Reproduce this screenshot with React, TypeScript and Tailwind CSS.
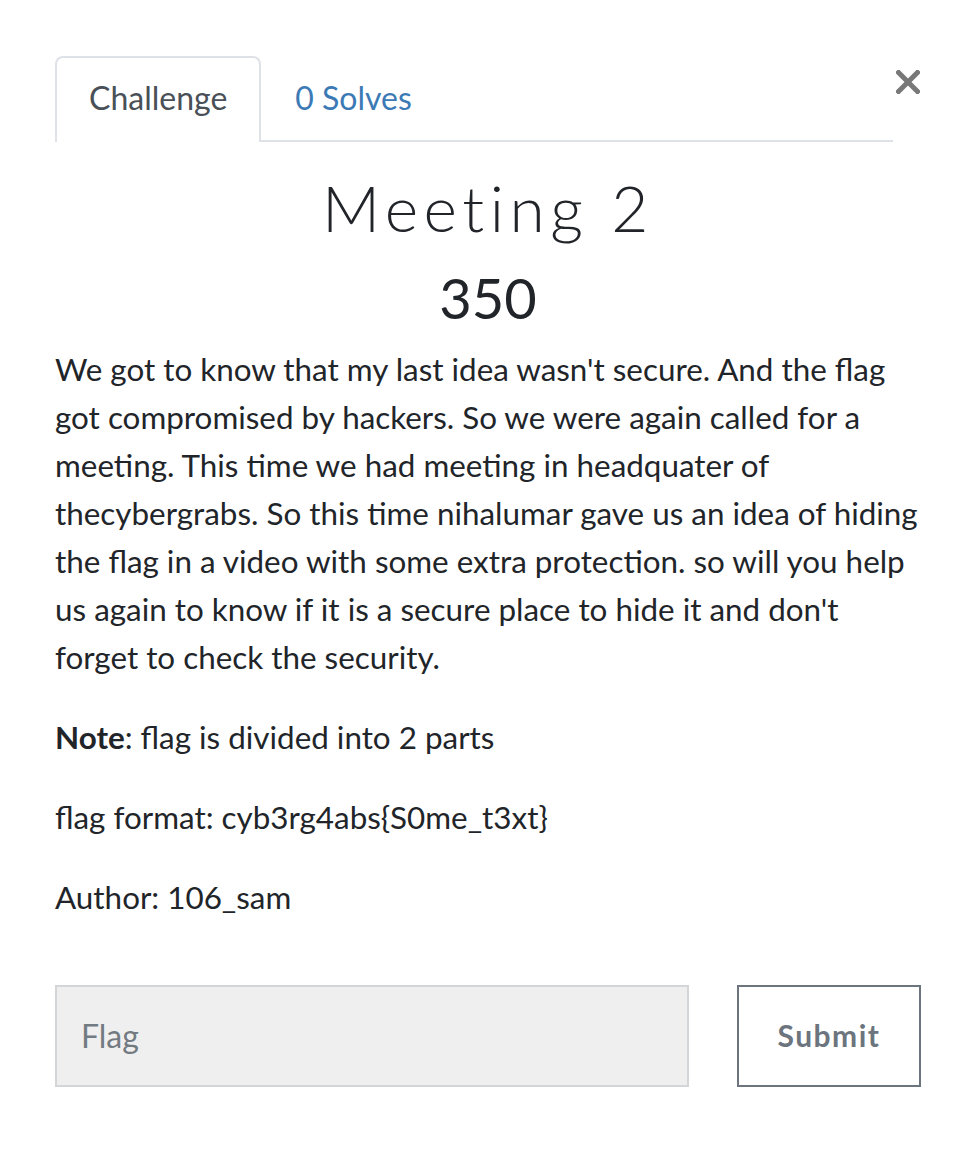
import React from "react";

export default function App() {
  return (
    <div className="w-[976px] min-h-[1162px] bg-white font-['Lato','Noto_Sans',sans-serif] text-[#212529]">
      <div className="px-[55px] pt-[56px]">
        <div className="flex items-start">
          <div className="flex flex-1 border-b-2 border-[#dee2e6]">
            <div className="-mb-[2px] rounded-t-[8px] border-2 border-b-0 border-[#dee2e6] bg-white px-[32px] py-[16px] text-[32px] leading-[48px] text-[#495057]">
              Challenge
            </div>
            <div className="border-2 border-transparent px-[32px] py-[16px] text-[32px] leading-[48px] text-[#3c7ab6]">
              0 Solves
            </div>
          </div>
          <button className="ml-[2px] mt-[14px] flex h-[24px] w-[26px] items-center justify-center">
            <svg width="24" height="24" viewBox="0 0 24 24">
              <path d="M2.5 2.5 L21.5 21.5 M21.5 2.5 L2.5 21.5" stroke="#787878" strokeWidth="5" strokeLinecap="square" />
            </svg>
          </button>
        </div>

        <h2 className="mt-[28px] text-center font-['Lato',sans-serif] text-[64px] font-light leading-[1.2] tracking-[5.5px]">
          Meeting 2
        </h2>
        <h3 className="mt-[17px] text-center text-[56px] leading-[1.2]">350</h3>

        <div className="mt-[14px] text-[31.4px] leading-[48px]">
          <p className="mb-[32px]">
            We got to know that my last idea wasn't secure. And the flag got compromised by hackers. So we were again called for a meeting. This time we had meeting in headquater of thecybergrabs. So this time nihalumar gave us an idea of hiding the flag in a video with some extra protection. so will you help us again to know if it is a secure place to hide it and don't forget to check the security.
          </p>
          <p className="mb-[32px]">
            <strong className="font-bold">Note</strong>: flag is divided into 2 parts
          </p>
          <p className="mb-[32px]">flag format: cyb3rg4abs{"{"}S0me_t3xt{"}"}</p>
          <p className="mb-[32px]">Author: 106_sam</p>
        </div>

        <div className="mt-[64px] flex gap-[48px]">
          <input
            className="h-[102px] flex-1 border-2 border-[#d3d6d9] bg-[#efefef] px-[24px] text-[32px] text-[#495057] outline-none placeholder:text-[#737b82]"
            placeholder="Flag"
          />
          <button className="h-[102px] w-[184px] border-2 border-[#6c757d] bg-white text-[30px] font-bold tracking-[1.5px] text-[#6c757d]">
            Submit
          </button>
        </div>
      </div>
    </div>
  );
}
